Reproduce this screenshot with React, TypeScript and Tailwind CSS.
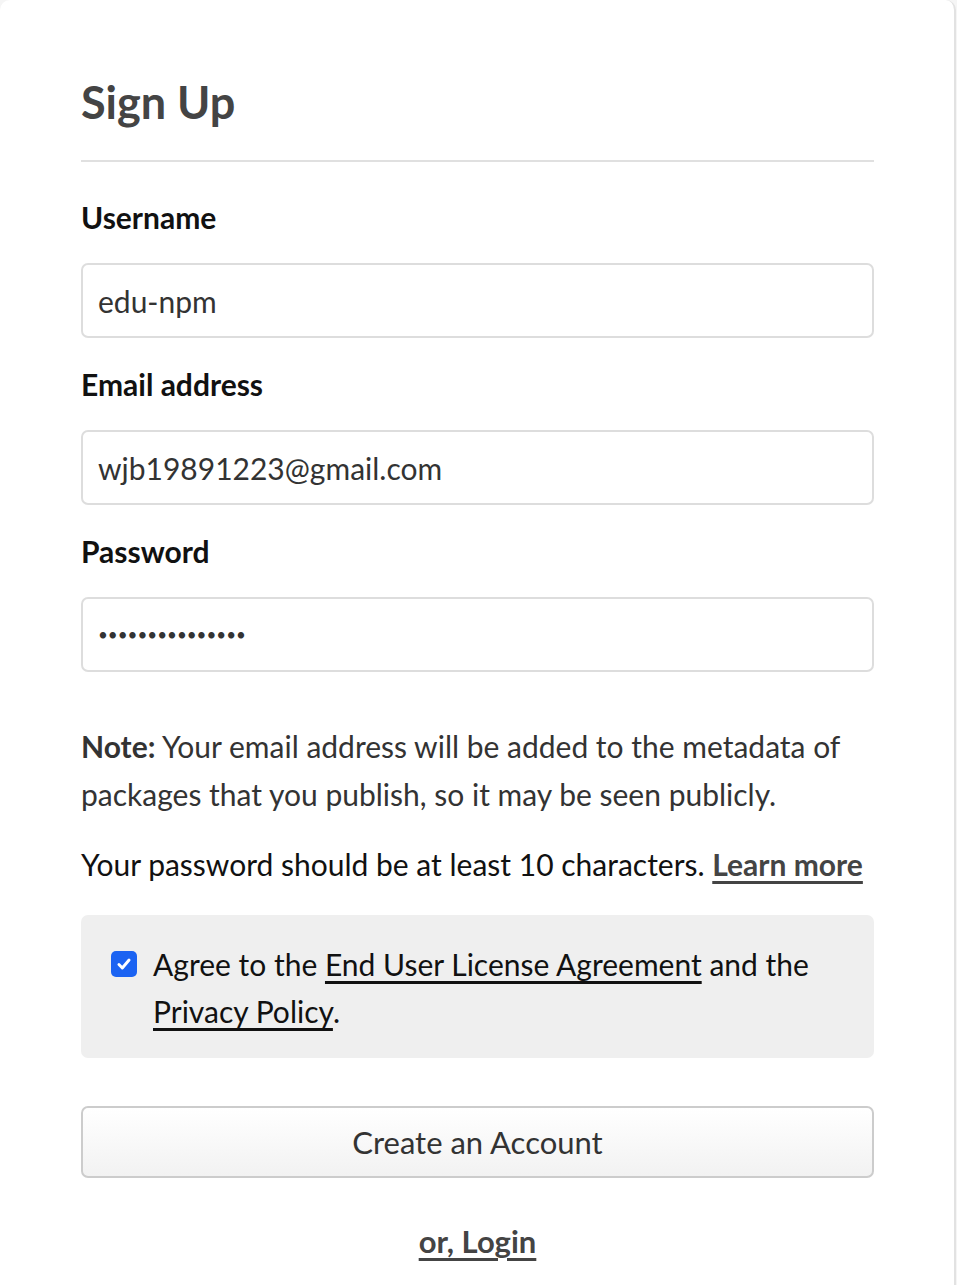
import React from 'react';

const font = { fontFamily: 'Lato, "Noto Sans", sans-serif' };

function Field({ label, value, type = 'text' }: { label: string; value: string; type?: string }) {
  const isPassword = type === 'password';
  return (
    <div>
      <label className="block pt-[28px] pb-[28px] text-[30px] leading-[36px] font-bold text-[#111]">{label}</label>
      <input
        type={type}
        defaultValue={value}
        readOnly
        className={`block h-[75px] w-full rounded-[7px] border-2 border-[#dddddd] bg-white px-[15px] text-[#333] outline-none ${
          isPassword ? 'text-[17px]' : 'text-[30px]'
        }`}
        style={font}
      />
    </div>
  );
}

export default function App() {
  return (
    <div className="min-h-screen bg-[#f5f5f5]" style={font}>
      <div className="mr-[1px] min-h-[1285px] rounded-tr-[10px] rounded-tl-[10px] border-r-2 border-[#e2e2e2] bg-white pl-[81px] pr-[80px] pt-[74px] pb-[20px]">
        <h1 className="pb-[30px] text-[45px] leading-[56px] font-bold text-[#444]">Sign Up</h1>
        <div className="mb-[9px] h-[2px] bg-[#e0e0e0]" />

        <Field label="Username" value="edu-npm" />
        <Field label="Email address" value="wjb19891223@gmail.com" />
        <Field label="Password" value="passwordpasswo1" type="password" />

        <p className="mt-[50px] text-[30px] leading-[48px] text-[#333]">
          <span className="font-bold">Note:</span> Your email address will be added to the metadata of packages that you
          publish, so it may be seen publicly.
        </p>
        <p className="mt-[26px] text-[30px] leading-[40px] text-[#111]">
          Your password should be at least 10 characters.{' '}
          <a href="#" className="font-bold text-[#444] underline underline-offset-[5px]">
            Learn more
          </a>
        </p>

        <div className="mt-[31px] flex gap-[16px] rounded-[7px] bg-[#efefef] px-[30px] pt-[26px] pb-[23px]">
          <span className="mt-[10px] flex h-[26px] w-[26px] shrink-0 items-center justify-center rounded-[5px] bg-[#1b63f2]">
            <svg viewBox="0 0 16 16" className="h-[18px] w-[18px]" fill="none" stroke="white" strokeWidth="2.6" strokeLinecap="round" strokeLinejoin="round">
              <path d="M3.5 8.5l3 3 6-7" />
            </svg>
          </span>
          <p className="text-[30px] leading-[47px] text-[#111]">
            Agree to the{' '}
            <a href="#" className="underline underline-offset-[5px]">
              End User License Agreement
            </a>{' '}
            and the{' '}
            <a href="#" className="underline underline-offset-[5px]">
              Privacy Policy
            </a>
            .
          </p>
        </div>

        <button
          type="button"
          className="mt-[48px] block h-[72px] w-full rounded-[7px] border-2 border-[#cccccc] bg-gradient-to-b from-white to-[#f2f2f2] text-[31px] text-[#333]"
          style={font}
        >
          Create an Account
        </button>

        <div className="mt-[40px] text-center">
          <a href="#" className="text-[31px] font-bold text-[#444] underline underline-offset-[5px]">
            or, Login
          </a>
        </div>
      </div>
    </div>
  );
}
